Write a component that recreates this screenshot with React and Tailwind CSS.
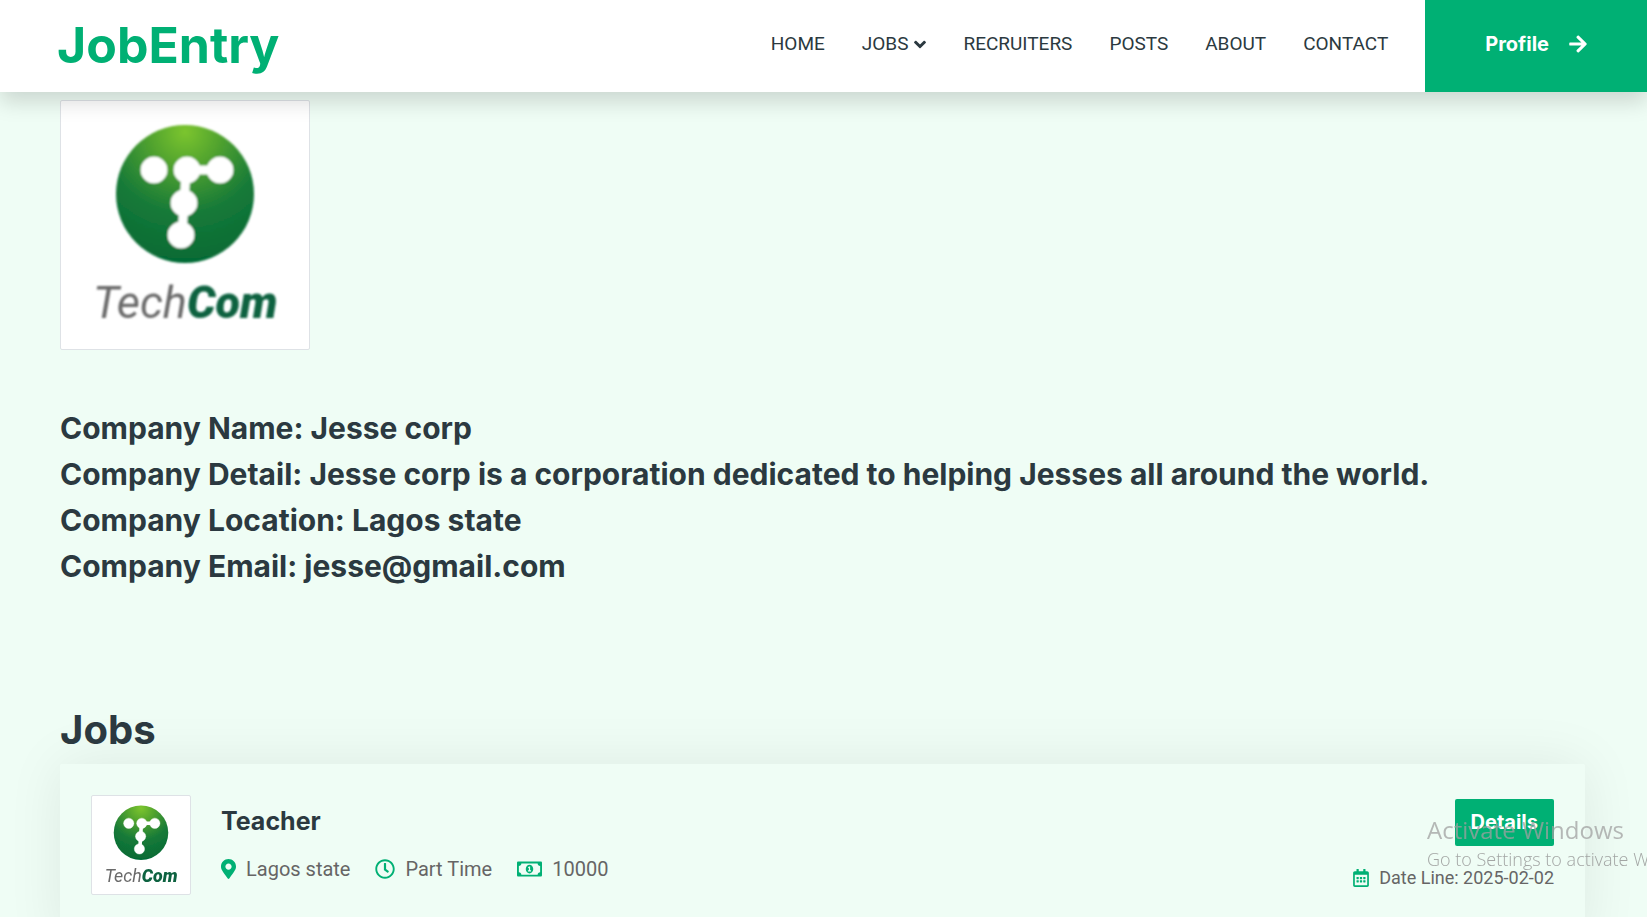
import { FaAngleDown, FaArrowRight, FaMapMarkerAlt, FaRegClock, FaRegMoneyBillAlt, FaRegCalendarAlt } from "react-icons/fa";

const navLinks = ["HOME", "JOBS", "RECRUITERS", "POSTS", "ABOUT", "CONTACT"];

const company = [
  ["Company Name", "Jesse corp"],
  ["Company Detail", "Jesse corp is a corporation dedicated to helping Jesses all around the world."],
  ["Company Location", "Lagos state"],
  ["Company Email", "jesse@gmail.com"],
];

function CompanyLogo({ id, className }) {
  return (
    <svg viewBox="0 0 248 248" role="img" aria-label="TechCom" className={className}>
      <defs>
        <radialGradient id={id} cx="0.5" cy="0.05" r="0.95">
          <stop offset="0" stopColor="#7cc52d" />
          <stop offset="0.3" stopColor="#4c9f2f" />
          <stop offset="0.62" stopColor="#177a38" />
          <stop offset="1" stopColor="#056a35" />
        </radialGradient>
        <filter id={id + "-soft"}>
          <feGaussianBlur stdDeviation="0.8" />
        </filter>
      </defs>
      <g filter={`url(#${id}-soft)`}>
        <circle cx="124" cy="93" r="69" fill={`url(#${id})`} />
        <g fill="#fff" stroke="#fff">
          <circle cx="93" cy="69" r="13" />
          <circle cx="126" cy="69" r="13" />
          <circle cx="159" cy="69" r="13" />
          <circle cx="123" cy="102" r="13" />
          <circle cx="120" cy="134" r="13" />
          <path d="M127 69H159" strokeWidth="9" />
          <path d="M125 72L123 102L121 134" strokeWidth="9" fill="none" />
        </g>
        <text x="32" y="217" fontFamily="Roboto, sans-serif" fontStyle="italic" fontSize="45" fill="#6a6a6a">
          Tech<tspan fontWeight="900" fill="#0a6240">Com</tspan>
        </text>
      </g>
    </svg>
  );
}

function Meta({ icon: Icon, iconClass, children }) {
  return (
    <span className="flex items-center gap-2.5">
      <Icon className={`h-5 text-[#00b074] ${iconClass}`} />
      {children}
    </span>
  );
}

export default function App() {
  return (
    <div className="min-h-screen overflow-x-hidden bg-[#effdf5] font-['Roboto',sans-serif] text-xl text-[#666565]">
      <header className="relative z-10 flex h-[92px] items-stretch justify-between bg-white shadow-[0_10px_20px_rgba(0,0,0,0.15)]">
        <a href="#" className="flex items-center pb-0.5 pl-[57px] font-['Inter',sans-serif] text-[50px] leading-[60px] font-bold text-[#00b074]">
          JobEntry
        </a>
        <div className="flex">
          <nav className="mr-[37px] flex items-center gap-[37px] pb-1 text-[19px] text-[#2b3940]">
            {navLinks.map((label) => (
              <a key={label} href="#" className="flex items-center gap-1.5">
                {label}
                {label === "JOBS" && <FaAngleDown className="h-[19px] w-3" />}
              </a>
            ))}
          </nav>
          <a href="#" className="flex items-center gap-5 bg-[#00b074] px-[60px] pb-1 font-['Inter',sans-serif] font-bold text-white">
            Profile
            <FaArrowRight className="h-5 w-[18px]" />
          </a>
        </div>
      </header>

      <main className="pt-2 pr-[62px] pl-[60px]">
        <div className="w-[250px] rounded-xs border border-[#dee2e6] bg-white">
          <CompanyLogo id="logo-large" className="block w-full" />
        </div>

        <section className="mt-[60px] flex flex-col gap-2.5 font-['Inter',sans-serif] text-[30px] leading-9 font-bold text-[#2b3940]">
          {company.map(([label, value]) => (
            <h2 key={label}>
              {label}: {value}
            </h2>
          ))}
        </section>

        <section className="mt-[122px]">
          <h2 className="font-['Inter',sans-serif] text-[40px] leading-[48px] font-bold text-[#2b3940]">Jobs</h2>
          <article className="mt-2.5 flex items-start justify-between rounded-xs p-[31px] pb-12 shadow-[0_0_56px_rgba(0,0,0,0.08)]">
            <div className="flex items-center gap-[30px]">
              <div className="w-[100px] rounded-xs border border-[#dee2e6] bg-white">
                <CompanyLogo id="logo-small" className="block w-full" />
              </div>
              <div>
                <h3 className="font-['Inter',sans-serif] text-[25px] leading-[30px] font-bold text-[#2b3940]">Teacher</h3>
                <div className="mt-[18px] flex gap-[25px] leading-[30px]">
                  <Meta icon={FaMapMarkerAlt} iconClass="w-[15px]">Lagos state</Meta>
                  <Meta icon={FaRegClock} iconClass="w-5">Part Time</Meta>
                  <Meta icon={FaRegMoneyBillAlt} iconClass="w-[25px]">10000</Meta>
                </div>
              </div>
            </div>
            <div className="flex flex-col items-end pt-1">
              <a href="#" className="rounded-xs bg-[#00b074] px-4 py-2 font-['Inter',sans-serif] leading-[31px] font-bold text-white">
                Details
              </a>
              <p className="mt-5 flex items-center gap-2.5 text-lg leading-6">
                <FaRegCalendarAlt className="h-[18px] w-4 text-[#00b074]" />
                Date Line: 2025-02-02
              </p>
            </div>
          </article>
        </section>
      </main>

      <div className="pointer-events-none fixed right-0 bottom-[46px] z-20 w-[220px] overflow-hidden font-['Open_Sans',sans-serif] whitespace-nowrap text-[#a0a0a0]/75">
        <p className="pb-px text-2xl leading-8">Activate Windows</p>
        <p className="text-lg leading-6 font-light text-[#909090]/80">Go to Settings to activate Windows.</p>
      </div>
    </div>
  );
}
